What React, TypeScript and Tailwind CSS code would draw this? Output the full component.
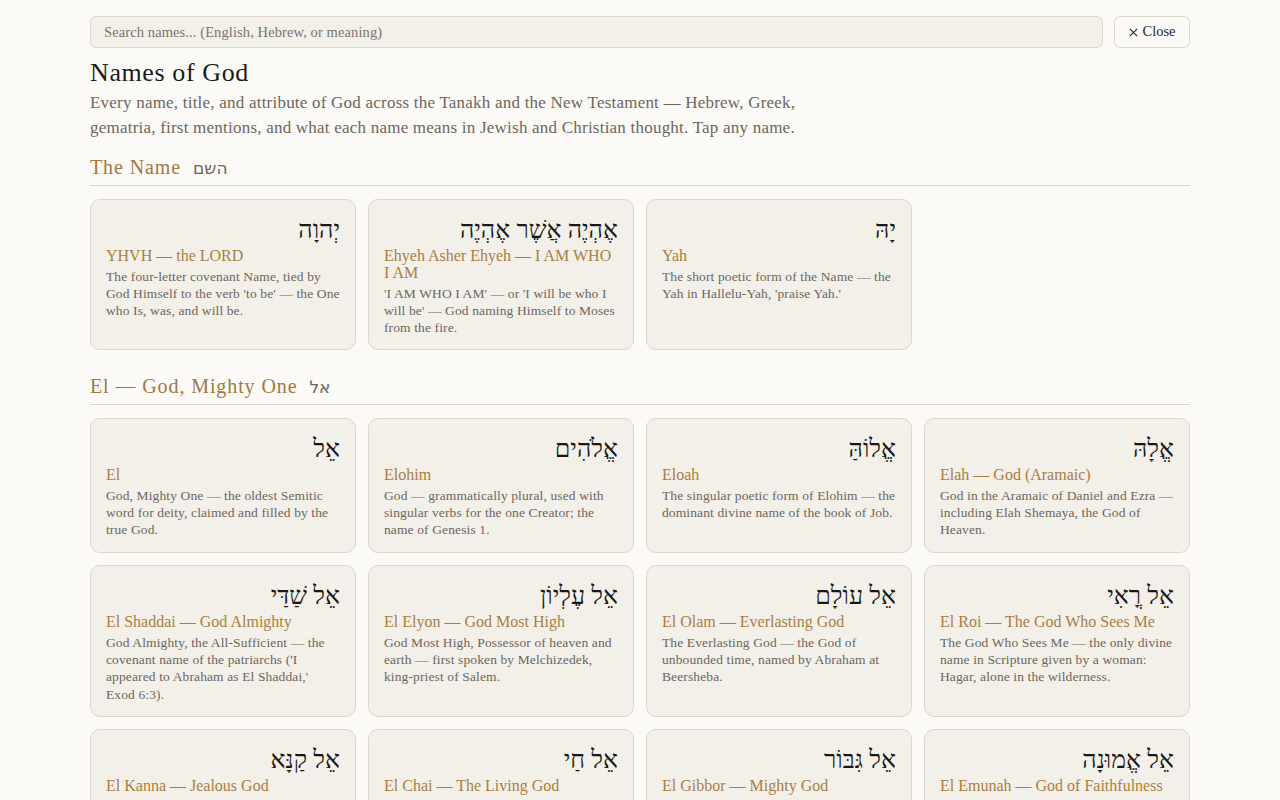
import React from "react";

type NameCard = { he: string; title: string; desc: string };
type Section = { title: string; he: string; cards: NameCard[] };

const sections: Section[] = [
  {
    title: "The Name",
    he: "השם",
    cards: [
      {
        he: "יְהוָה",
        title: "YHVH — the LORD",
        desc: "The four-letter covenant Name, tied by God Himself to the verb 'to be' — the One who Is, was, and will be.",
      },
      {
        he: "אֶהְיֶה אֲשֶׁר אֶהְיֶה",
        title: "Ehyeh Asher Ehyeh — I AM WHO I AM",
        desc: "'I AM WHO I AM' — or 'I will be who I will be' — God naming Himself to Moses from the fire.",
      },
      {
        he: "יָהּ",
        title: "Yah",
        desc: "The short poetic form of the Name — the Yah in Hallelu-Yah, 'praise Yah.'",
      },
    ],
  },
  {
    title: "El — God, Mighty One",
    he: "אל",
    cards: [
      {
        he: "אֵל",
        title: "El",
        desc: "God, Mighty One — the oldest Semitic word for deity, claimed and filled by the true God.",
      },
      {
        he: "אֱלֹהִים",
        title: "Elohim",
        desc: "God — grammatically plural, used with singular verbs for the one Creator; the name of Genesis 1.",
      },
      {
        he: "אֱלוֹהַּ",
        title: "Eloah",
        desc: "The singular poetic form of Elohim — the dominant divine name of the book of Job.",
      },
      {
        he: "אֱלָהּ",
        title: "Elah — God (Aramaic)",
        desc: "God in the Aramaic of Daniel and Ezra — including Elah Shemaya, the God of Heaven.",
      },
      {
        he: "אֵל שַׁדַּי",
        title: "El Shaddai — God Almighty",
        desc: "God Almighty, the All-Sufficient — the covenant name of the patriarchs ('I appeared to Abraham as El Shaddai,' Exod 6:3).",
      },
      {
        he: "אֵל עֶלְיוֹן",
        title: "El Elyon — God Most High",
        desc: "God Most High, Possessor of heaven and earth — first spoken by Melchizedek, king-priest of Salem.",
      },
      {
        he: "אֵל עוֹלָם",
        title: "El Olam — Everlasting God",
        desc: "The Everlasting God — the God of unbounded time, named by Abraham at Beersheba.",
      },
      {
        he: "אֵל רֳאִי",
        title: "El Roi — The God Who Sees Me",
        desc: "The God Who Sees Me — the only divine name in Scripture given by a woman: Hagar, alone in the wilderness.",
      },
      {
        he: "אֵל קַנָּא",
        title: "El Kanna — Jealous God",
        desc: "The Jealous God — whose love will not share His people with idols; spoken at Sinai.",
      },
      {
        he: "אֵל חַי",
        title: "El Chai — The Living God",
        desc: "The Living God — set against the lifeless idols of the nations; the God who acts.",
      },
      {
        he: "אֵל גִּבּוֹר",
        title: "El Gibbor — Mighty God",
        desc: "Mighty God — the warrior strength of God, named in Isaiah's promise of the coming Child.",
      },
      {
        he: "אֵל אֱמוּנָה",
        title: "El Emunah — God of Faithfulness",
        desc: "The Faithful God — who keeps covenant and steadfast love to a thousand generations.",
      },
    ],
  },
];

function Card({ card }: { card: NameCard }) {
  return (
    <div className="rounded-[10px] border border-[#dcd6cb] bg-[#f3f0ea] px-[15px] pt-[13px] pb-[13px]">
      <div
        dir="rtl"
        className="text-right font-['Liberation_Serif',serif] text-[25px] leading-[34px] text-[#1a1816]"
      >
        {card.he}
      </div>
      <div className="text-[16px] leading-[17px] text-[#ab7d40]">{card.title}</div>
      <p className="mt-[4px] text-[13.5px] leading-[17.3px] tracking-[0.12px] text-[#6d665d]">{card.desc}</p>
    </div>
  );
}

export default function App() {
  return (
    <div className="min-h-screen bg-[#fcfaf7] font-['Liberation_Serif',serif]">
      <div className="mx-auto w-[1100px] pt-4 pb-10">
        <div className="flex gap-[11px]">
          <input
            className="h-8 flex-1 rounded-md border border-[#ddd7cc] bg-[#f3f0ea] px-[13px] text-[14.5px] tracking-[0.1px] text-[#3a3631] outline-none placeholder:text-[#7a736a]"
            placeholder="Search names... (English, Hebrew, or meaning)"
          />
          <button className="flex h-8 w-[76px] items-center justify-center gap-[3px] rounded-md border border-[#ddd7cc] bg-[#fcfaf7] text-[14.5px] text-[#2a2724]">
            <svg width="11" height="11" viewBox="0 0 12 12" fill="none" stroke="#2a2724" strokeWidth="1.2">
              <path d="M2 2 L10 10 M10 2 L2 10" />
            </svg>
            Close
          </button>
        </div>

        <h1 className="mt-[10px] text-[26px] leading-[30px] tracking-[0.6px] text-[#1c1a17]">Names of God</h1>
        <p className="mt-[2px] max-w-[730px] text-[17px] leading-[25px] tracking-[0.22px] text-[#6d665d]">
          Every name, title, and attribute of God across the Tanakh and the New Testament — Hebrew, Greek,
          gematria, first mentions, and what each name means in Jewish and Christian thought. Tap any name.
        </p>

        {sections.map((s, i) => (
          <section key={s.title} className={i === 0 ? "mt-[14px]" : "mt-[23px]"}>
            <div className="flex items-baseline gap-[12px] border-b border-[#d8d2c7] pb-[3px]">
              <h2 className="text-[20px] leading-[26px] tracking-[0.9px] text-[#a27841]">{s.title}</h2>
              <span dir="rtl" className="font-['DejaVu_Sans',sans-serif] text-[17px] text-[#6d665d]">
                {s.he}
              </span>
            </div>
            <div className="mt-[13px] grid grid-cols-4 gap-x-[12px] gap-y-[12px]">
              {s.cards.map((c) => (
                <Card key={c.title} card={c} />
              ))}
            </div>
          </section>
        ))}
      </div>
    </div>
  );
}
